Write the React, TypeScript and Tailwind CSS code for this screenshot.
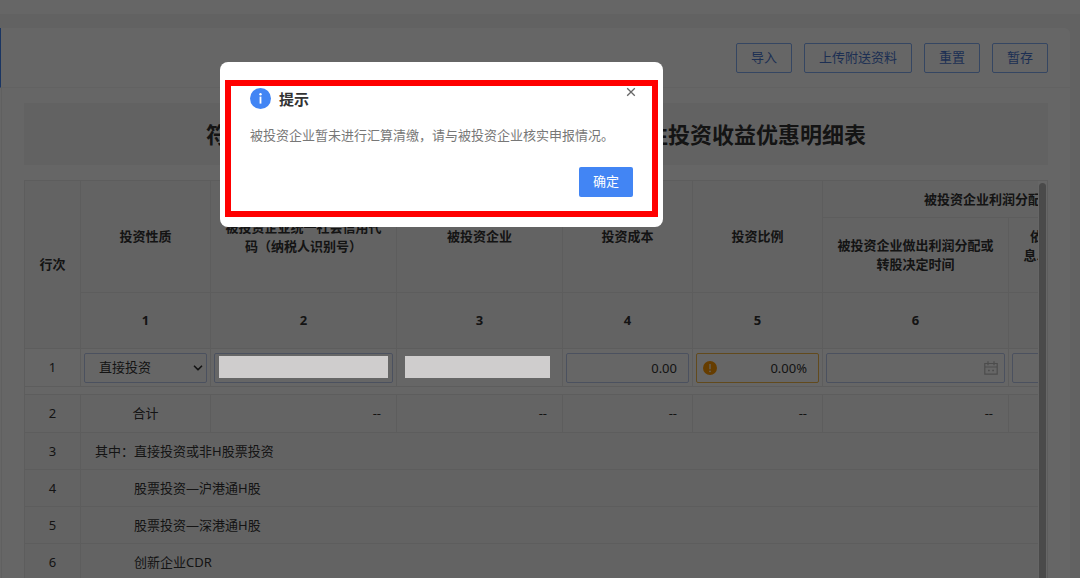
import React, { useState } from 'react';
import { ChevronDown } from 'lucide-react';

const TOOLBAR = ['导入', '上传附送资料', '重置', '暂存'];

const DETAIL_ROWS = [
  { no: 3, prefix: '其中：', label: '直接投资或非H股票投资' },
  { no: 4, prefix: '', label: '股票投资—沪港通H股' },
  { no: 5, prefix: '', label: '股票投资—深港通H股' },
  { no: 6, prefix: '', label: '创新企业CDR' },
];

const TH = 'border-r border-b border-[#e8e8e8] px-3 text-center font-bold';
const TD = 'border-r border-b border-[#e8e8e8]';
const FIELD = 'block h-[30px] w-full rounded-xs border border-[#bccbee] bg-transparent text-[13px] text-[#333] outline-none';

const CalendarIcon: React.FC = () => (
  <svg className="pointer-events-none absolute top-2 right-[7px] h-[14px] w-[14px]" viewBox="0 0 14 14" fill="none" stroke="#bdbdbd">
    <path d="M0.8 2.5h12.4v10.7H0.8zM0.8 6h12.4M4 0.3v4M10 0.3v4" strokeWidth="1.2" />
    <path d="M4 9.4h1.8M8.2 9.4h1.8" strokeWidth="1.5" />
  </svg>
);

const WarnIcon: React.FC = () => (
  <svg className="pointer-events-none absolute top-2 left-[7px] h-[14px] w-[14px]" viewBox="0 0 14 14">
    <circle cx="7" cy="7" r="7" fill="#ff9900" />
    <path d="M7 3v5.2" stroke="#fff" strokeWidth="1.2" />
    <circle cx="7" cy="10.4" r="0.8" fill="#fff" />
  </svg>
);

const DetailTable: React.FC = () => {
  const [kind, setKind] = useState('直接投资');
  const [cost, setCost] = useState('0.00');
  const [ratio, setRatio] = useState('0.00%');

  return (
    <table className="w-[1170px] table-fixed border-separate border-spacing-0 border-t border-l border-[#e8e8e8] text-[13px] leading-[19px] text-[#333]">
      <colgroup>
        <col className="w-14" />
        <col className="w-[130px]" />
        <col className="w-[186px]" />
        <col className="w-[166px]" />
        <col className="w-[130px]" />
        <col className="w-[130px]" />
        <col className="w-[186px]" />
        <col className="w-[186px]" />
      </colgroup>
      <thead className="bg-[#f8f8f8]">
        <tr className="h-[37px]">
          <th rowSpan={3} className={TH}>行次</th>
          <th rowSpan={2} className={TH}>投资性质</th>
          <th rowSpan={2} className={TH}>被投资企业统一社会信用代码（纳税人识别号）</th>
          <th rowSpan={2} className={TH}>被投资企业</th>
          <th rowSpan={2} className={TH}>投资成本</th>
          <th rowSpan={2} className={TH}>投资比例</th>
          <th colSpan={2} className={TH}>被投资企业利润分配确认金额</th>
        </tr>
        <tr className="h-[75px]">
          <th className={TH}>被投资企业做出利润分配或转股决定时间</th>
          <th className={TH}>依决定归属于本公司的股息、红利等权益性投资收益金额</th>
        </tr>
        <tr className="h-14">
          {[1, 2, 3, 4, 5, 6, 7].map((n) => (
            <th key={n} className={TH}>{n}</th>
          ))}
        </tr>
      </thead>
      <tbody>
        <tr className="h-[38px]">
          <td className={`${TD} text-center`}>1</td>
          <td className={`${TD} px-[3px]`}>
            <div className="relative">
              <select
                aria-label="投资性质"
                value={kind}
                onChange={(e) => setKind(e.target.value)}
                className={`${FIELD} appearance-none pl-[14px]`}
              >
                <option>直接投资</option>
                <option>股票投资</option>
              </select>
              <ChevronDown className="pointer-events-none absolute top-2 right-0.5 h-[14px] w-[14px]" strokeWidth={3} />
            </div>
          </td>
          <td className={`${TD} px-[3px]`}>
            <div className="relative">
              <input aria-label="统一社会信用代码" className={FIELD} />
              <span className="absolute inset-x-[5px] top-[3px] z-20 h-[22px] bg-[#cfcdcd]" />
            </div>
          </td>
          <td className={`${TD} pr-3 pb-0.5 pl-2`}>
            <div className="relative z-20 h-[22px] bg-[#cfcdcd]" />
          </td>
          <td className={`${TD} px-[3px]`}>
            <input
              aria-label="投资成本"
              value={cost}
              onChange={(e) => setCost(e.target.value)}
              className={`${FIELD} px-[11px] text-right`}
            />
          </td>
          <td className={`${TD} px-[3px]`}>
            <div className="relative">
              <input
                aria-label="投资比例"
                value={ratio}
                onChange={(e) => setRatio(e.target.value)}
                className="block h-[30px] w-full rounded-xs border border-[#f5b84a] bg-transparent px-[11px] text-right text-[13px] text-[#333] outline-none"
              />
              <WarnIcon />
            </div>
          </td>
          <td className={`${TD} px-[3px]`}>
            <div className="relative">
              <input aria-label="决定时间" className={FIELD} />
              <CalendarIcon />
            </div>
          </td>
          <td className={`${TD} px-[3px]`}>
            <input aria-label="收益金额" className={FIELD} />
          </td>
        </tr>
        <tr className="h-2">
          <td colSpan={8} className={TD} />
        </tr>
        <tr className="h-[38px] bg-[#fafafa]">
          <td className={`${TD} text-center`}>2</td>
          <td className={`${TD} text-center`}>合计</td>
          {[2, 3, 4, 5, 6, 7].map((n) => (
            <td key={n} className={`${TD} px-[15px] text-right`}>--</td>
          ))}
        </tr>
        {DETAIL_ROWS.map((row) => (
          <tr key={row.no} className="h-[37px] bg-[#f8f8f8]">
            <td className={`${TD} text-center`}>{row.no}</td>
            <td colSpan={7} className={TD}>
              <div className="flex pl-[14px]">
                <span className="w-[39px]">{row.prefix}</span>
                <span>{row.label}</span>
              </div>
            </td>
          </tr>
        ))}
      </tbody>
    </table>
  );
};

const TipDialog: React.FC<{ onClose: () => void }> = ({ onClose }) => (
  <div className="fixed inset-0 z-30 flex items-start pt-[62px] pl-[220px]">
    <div role="dialog" aria-labelledby="tip-title" className="w-[443px] rounded-lg bg-white px-[5px] pt-[18px] pb-[10px]">
      <div className="border-[6px] border-[#ff0000] pb-[14px] pl-[19px]">
        <div className="flex items-start pr-[15px]">
          <svg className="mt-0.5 h-[21px] w-[21px]" viewBox="0 0 21 21">
            <circle cx="10.5" cy="10.5" r="10.5" fill="#4285f4" />
            <circle cx="10.5" cy="6.2" r="1.2" fill="#fff" />
            <path d="M10.5 8.6v7" stroke="#fff" strokeWidth="1.8" />
          </svg>
          <h2 id="tip-title" className="mt-0.5 ml-2 grow text-[15px] leading-[22px] font-bold text-[#333]">提示</h2>
          <button type="button" aria-label="关闭" onClick={onClose} className="cursor-pointer">
            <svg className="h-3 w-3" viewBox="0 0 12 12" stroke="#666" strokeWidth="1.3">
              <path d="M2.2 2.2l7.6 7.6M9.8 2.2l-7.6 7.6" />
            </svg>
          </button>
        </div>
        <p className="mt-[15px] text-[13px] leading-5 text-[#777]">被投资企业暂未进行汇算清缴，请与被投资企业核实申报情况。</p>
        <div className="mt-[22px] flex justify-end pr-[19px]">
          <button
            type="button"
            onClick={onClose}
            className="h-[30px] cursor-pointer rounded-xs bg-[#4285f4] px-[14px] text-[13px] text-white"
          >
            确定
          </button>
        </div>
      </div>
    </div>
  </div>
);

export default function App() {
  const [showTip, setShowTip] = useState(true);

  return (
    <div lang="zh-CN" className="h-screen overflow-hidden bg-[#f5f5f5] font-['Noto_Sans','Noto_Sans_CJK_SC',sans-serif]">
      <header className="h-[14px] bg-white" />

      <main className="mt-[14px] mr-[10px] h-full rounded-tr-md bg-white">
        <div className="flex h-[60px] items-center justify-end gap-3 border-b border-l border-b-[#f5f5f5] border-l-[#4285f4] pr-[22px]">
          {TOOLBAR.map((label) => (
            <button
              key={label}
              type="button"
              className="h-[30px] cursor-pointer rounded-xs border border-[#84aef5] px-[14px] text-[13px] text-[#4a76d0]"
            >
              {label}
            </button>
          ))}
        </div>

        <div className="ml-px border-l border-[#f0f0f0] px-[22px] pt-[15px]">
          <h1 className="bg-[#f6f6f6] text-center text-[22px] leading-[62px] font-bold whitespace-nowrap text-[#333]">
            符合条件的居民企业之间的股息、红利等权益性投资收益优惠明细表
          </h1>

          <div className="mt-[15px] flex border-r border-[#e8e8e8]">
            <div className="grow overflow-hidden">
              <DetailTable />
            </div>
            <div className="flex w-[9px] shrink-0 flex-col border-t border-[#e8e8e8] px-px pt-0.5">
              <div className="grow rounded-full bg-[#b8b8b8]" />
            </div>
          </div>
        </div>
      </main>

      {/* Page mask */}
      {showTip && <div className="fixed inset-0 z-10 bg-black/60" />}
      {showTip && <TipDialog onClose={() => setShowTip(false)} />}
    </div>
  );
}
